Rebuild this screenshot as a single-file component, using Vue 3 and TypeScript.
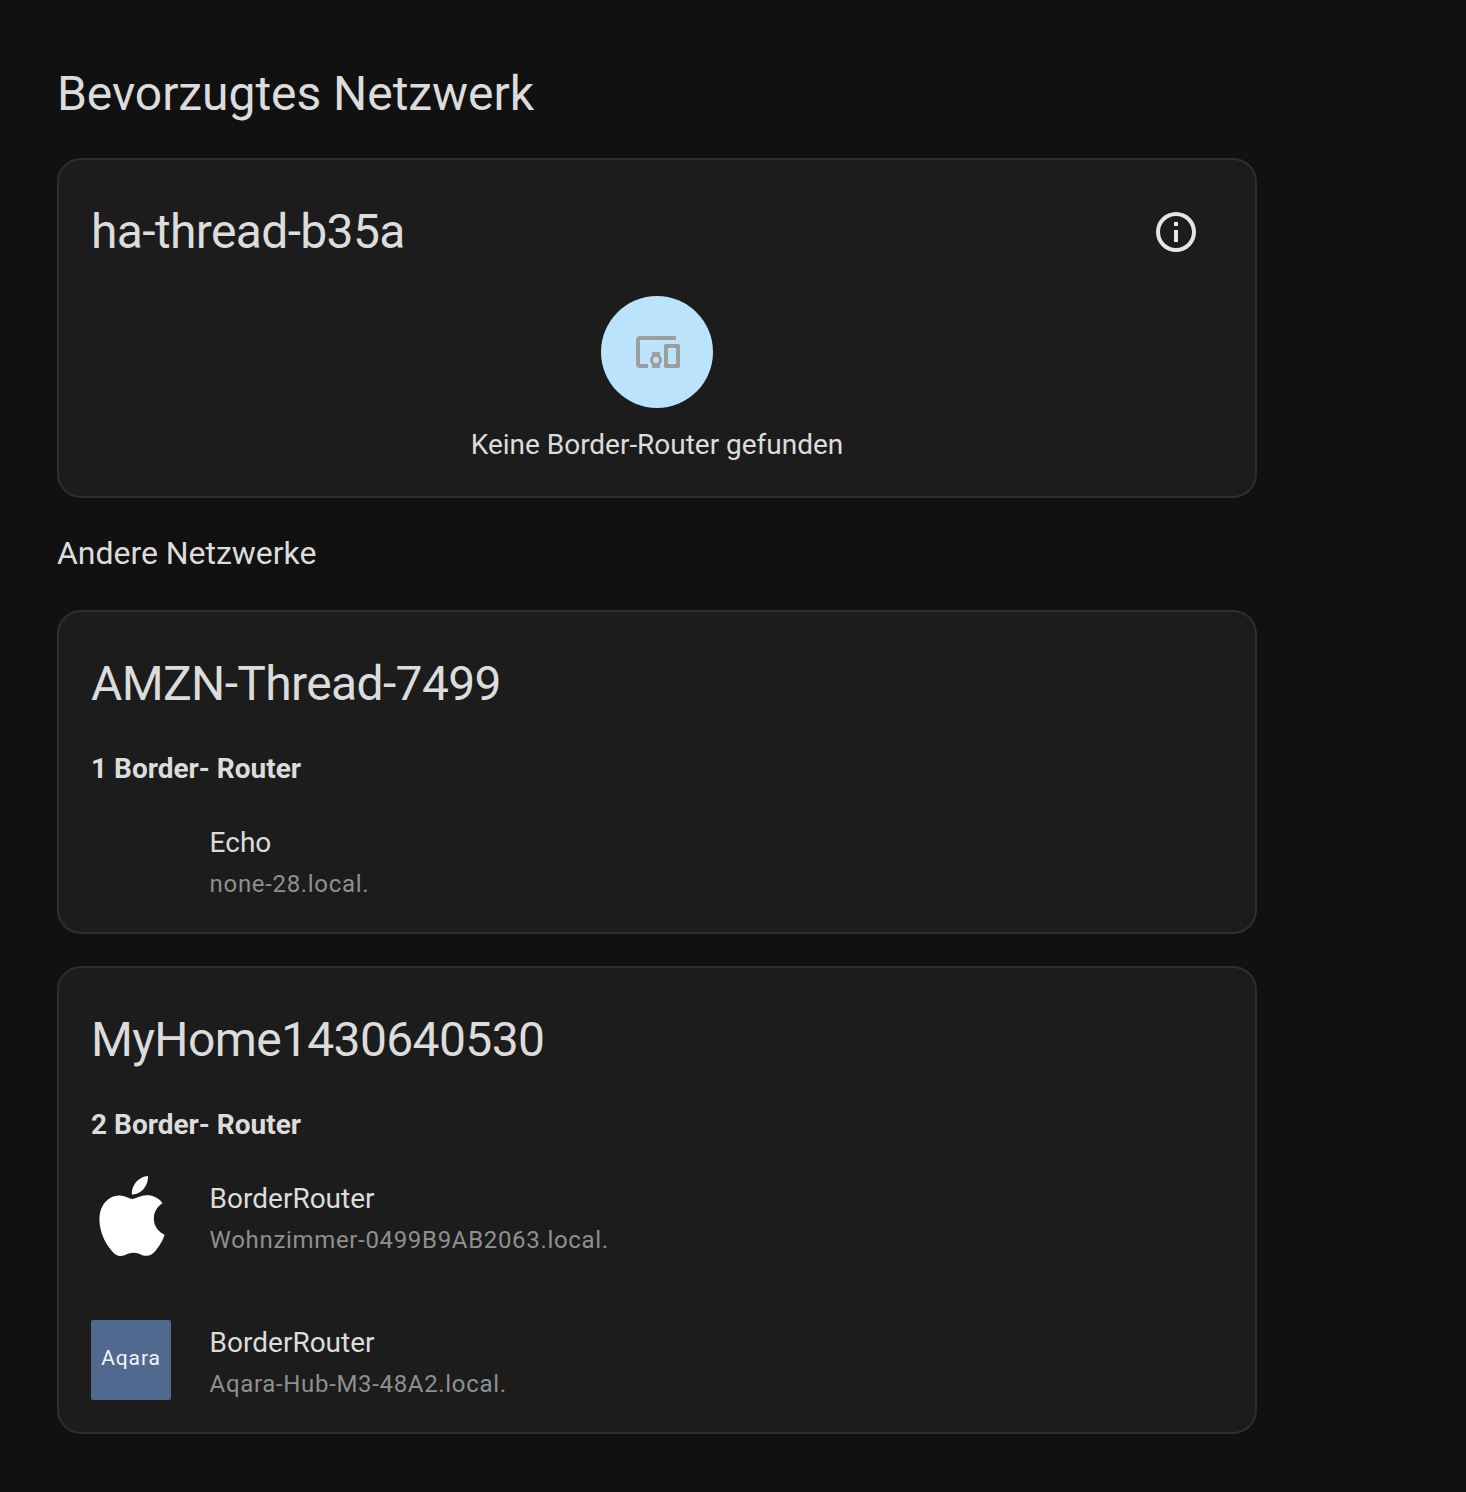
<script setup lang="ts">
interface Router { name: string; host: string; logo: '' | 'apple' | 'aqara' }
interface Network { name: string; count: string; routers: Router[] }

const networks: Network[] = [
  {
    name: 'AMZN-Thread-7499',
    count: '1 Border- Router',
    routers: [{ name: 'Echo', host: 'none-28.local.', logo: '' }],
  },
  {
    name: 'MyHome1430640530',
    count: '2 Border- Router',
    routers: [
      { name: 'BorderRouter', host: 'Wohnzimmer-0499B9AB2063.local.', logo: 'apple' },
      { name: 'BorderRouter', host: 'Aqara-Hub-M3-48A2.local.', logo: 'aqara' },
    ],
  },
]
</script>

<template>
  <main class="page">
    <h1 class="page-title">Bevorzugtes Netzwerk</h1>

    <section class="card">
      <header class="card-header with-action">
        <h2 class="card-title">ha-thread-b35a</h2>
        <svg class="info" viewBox="0 0 24 24" width="48" height="48" aria-label="Info">
          <path fill="#e6e6e6" d="M11,9H13V7H11M12,20C7.59,20 4,16.41 4,12C4,7.59 7.59,4 12,4C16.41,4 20,7.59 20,12C20,16.41 16.41,20 12,20M12,2A10,10 0 0,0 2,12A10,10 0 0,0 12,22A10,10 0 0,0 22,12A10,10 0 0,0 12,2M11,17H13V11H11V17Z" />
        </svg>
      </header>
      <div class="empty">
        <div class="empty-circle">
          <svg class="devices" viewBox="0 0 24 24" width="48" height="48">
            <path fill="#9e9e9e" d="M3,6H21V4H3C1.9,4 1,4.9 1,6V18A2,2 0 0,0 3,20H7V18H3V6M13,12H9V13.78C8.39,14.33 8,15.11 8,16C8,16.89 8.39,17.67 9,18.22V20H13V18.22C13.61,17.67 14,16.88 14,16C14,15.12 13.61,14.33 13,13.78V12M11,17.5A1.5,1.5 0 0,1 9.5,16A1.5,1.5 0 0,1 11,14.5A1.5,1.5 0 0,1 12.5,16A1.5,1.5 0 0,1 11,17.5M22,8H16A1,1 0 0,0 15,9V19A1,1 0 0,0 16,20H22A1,1 0 0,0 23,19V9A1,1 0 0,0 22,8M21,18H17V10H21V18Z" />
          </svg>
        </div>
        <p class="empty-text">Keine Border-Router gefunden</p>
      </div>
    </section>

    <h3 class="section-title">Andere Netzwerke</h3>

    <div class="networks">
      <section v-for="net in networks" :key="net.name" class="card">
        <header class="card-header">
          <h2 class="card-title">{{ net.name }}</h2>
        </header>
        <h4 class="count">{{ net.count }}</h4>
        <div v-for="r in net.routers" :key="r.host" class="router">
          <div class="logo">
            <svg v-if="r.logo === 'apple'" class="apple" viewBox="0 0 24 24" width="80" height="80">
              <path fill="#ffffff" d="M12.152 6.896c-.948 0-2.415-1.078-3.96-1.04-2.04.027-3.91 1.183-4.961 3.014-2.117 3.675-.546 9.103 1.519 12.09 1.013 1.454 2.208 3.09 3.792 3.039 1.52-.065 2.09-.987 3.935-.987 1.831 0 2.35.987 3.96.948 1.637-.026 2.676-1.48 3.676-2.948 1.156-1.688 1.636-3.325 1.662-3.415-.039-.013-3.182-1.221-3.22-4.857-.026-3.04 2.48-4.494 2.597-4.559-1.429-2.09-3.623-2.324-4.39-2.376-2-.156-3.675 1.09-4.61 1.09zM15.53 3.83c.843-1.012 1.4-2.427 1.245-3.83-1.207.052-2.662.805-3.532 1.818-.78.896-1.454 2.338-1.273 3.714 1.338.104 2.715-.688 3.559-1.701" />
            </svg>
            <div v-else-if="r.logo === 'aqara'" class="aqara"><span class="aqara-word">Aqara</span></div>
          </div>
          <div class="router-text">
            <div class="router-name">{{ r.name }}</div>
            <div class="router-host">{{ r.host }}</div>
          </div>
        </div>
      </section>
    </div>
  </main>
</template>

<style scoped>
.page {
  box-sizing: border-box;
  width: 1257px;
  padding: 0 0 58px 57px;
  font-family: Roboto, "Liberation Sans", sans-serif;
  color: #dcdcdc;
}
.page-title {
  margin: 0;
  padding: 62px 0 32px 0;
  font-size: 48px;
  line-height: 64px;
  font-weight: 400;
  letter-spacing: -0.05px;
}
.card {
  box-sizing: border-box;
  width: 1200px;
  background: #1c1c1c;
  border: 2px solid #2f2f2f;
  border-radius: 24px;
}
.card-header {
  display: flex;
  align-items: center;
  justify-content: space-between;
  padding: 48px 32px 0;
  height: 48px;
  box-sizing: content-box;
}
.with-action {
  padding-right: 55px;
}
.card-title {
  margin: 0;
  font-size: 48px;
  line-height: 48px;
  font-weight: 400;
  letter-spacing: -0.64px;
}
.info {
  display: block;
}
.empty {
  display: flex;
  flex-direction: column;
  align-items: center;
  padding: 40px 0 35px;
}
.empty-circle {
  display: flex;
  align-items: center;
  justify-content: center;
  width: 112px;
  height: 112px;
  border-radius: 50%;
  background: #bbe4fc;
}
.devices {
  margin-left: 2px;
}
.empty-text {
  margin: 21px 0 0;
  font-size: 28px;
  line-height: 32px;
  letter-spacing: -0.02px;
}
.section-title {
  margin: 0;
  padding: 39px 0 41px 0;
  font-size: 32px;
  line-height: 32px;
  font-weight: 400;
  letter-spacing: -0.03px;
}
.networks {
  display: flex;
  flex-direction: column;
  gap: 32px;
}
.count {
  margin: 45px 0 3px;
  padding-left: 32px;
  font-size: 28px;
  line-height: 32px;
  font-weight: 700;
}
.router {
  display: flex;
  align-items: center;
  gap: 39px;
  height: 144px;
  padding-left: 32px;
}
.logo {
  flex: none;
  width: 80px;
  height: 80px;
}
.apple {
  display: block;
  margin-left: 0.5px;
}
.aqara {
  display: flex;
  align-items: center;
  justify-content: center;
  width: 80px;
  height: 80px;
  border-radius: 2px;
  background: #51688f;
  color: #f2f4f8;
  font-size: 21px;
  font-weight: 400;
  line-height: 21px;
  letter-spacing: 0.9px;
}
.aqara-word {
  margin-top: -3px;
}
.router-text {
  padding-top: 6px;
  margin-left: -0.4px;
}
.router-name {
  font-size: 28px;
  line-height: 32px;
}
.router-host {
  margin-top: 9px;
  font-size: 24px;
  line-height: 32px;
  letter-spacing: 0.67px;
  color: #8f8f8f;
}
</style>

<style>
html, body {
  background: #111111;
}
</style>
